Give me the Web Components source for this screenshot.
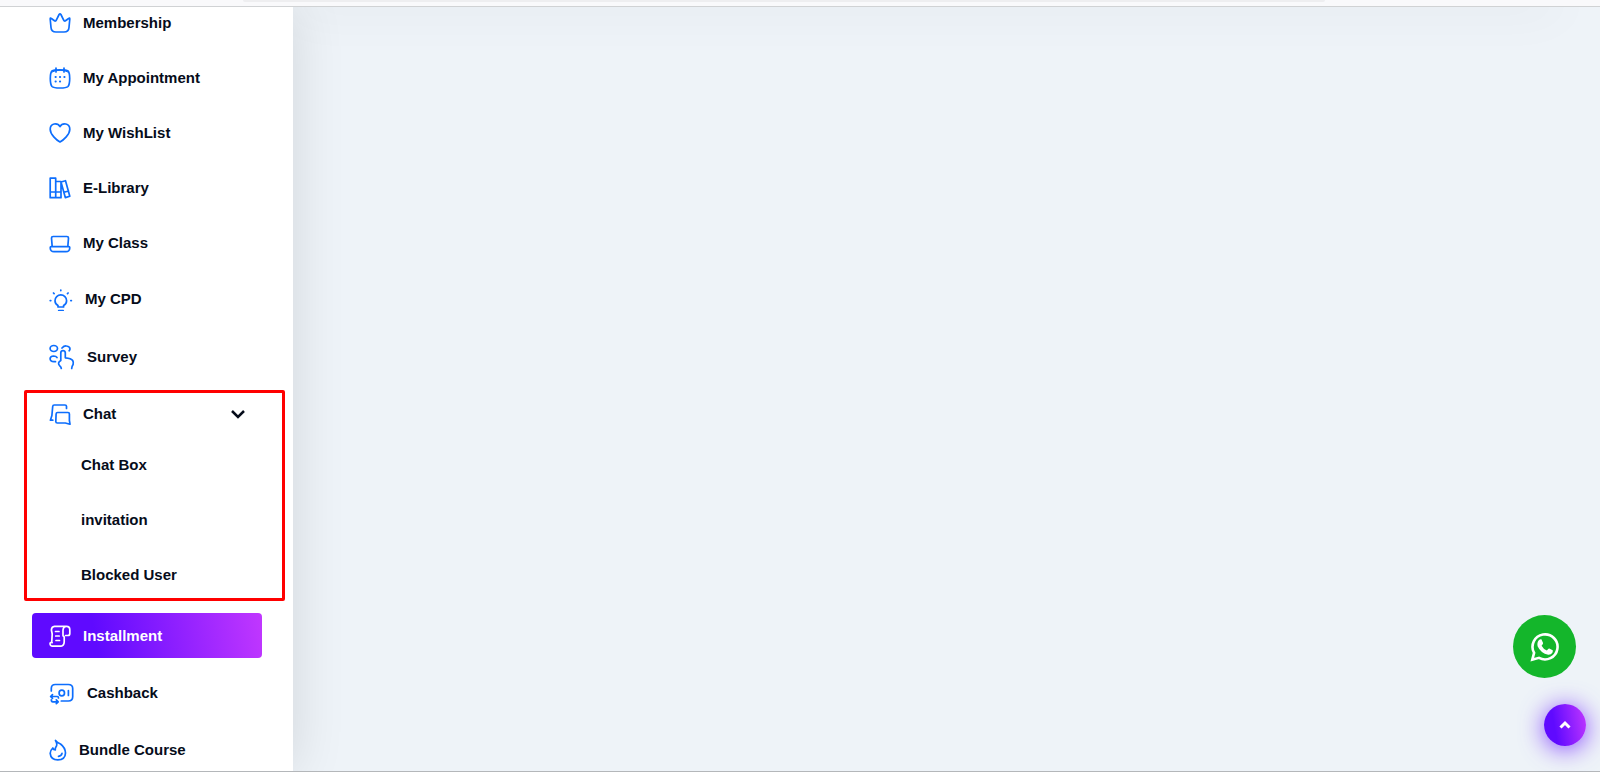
<!DOCTYPE html>
<html lang="en">
<head>
<meta charset="utf-8">
<title>Dashboard</title>
<style>
body{margin:0;height:100vh;overflow:hidden;font-family:"Liberation Sans",Arial,sans-serif;font-size:15px;line-height:20px;color:#060c1a;background:#eef3f8}
</style>
</head>
<body>
<dash-shell>
  <side-nav slot="nav">
    <nav-item icon="crown">Membership</nav-item>
    <nav-item icon="calendar">My Appointment</nav-item>
    <nav-item icon="heart">My WishList</nav-item>
    <nav-item icon="books">E-Library</nav-item>
    <nav-item icon="laptop">My Class</nav-item>
    <nav-item icon="bulb" size="medium">My CPD</nav-item>
    <nav-item icon="survey" size="large">Survey</nav-item>
    <nav-group label="Chat">
      <sub-item>Chat Box</sub-item>
      <sub-item>invitation</sub-item>
      <sub-item>Blocked User</sub-item>
    </nav-group>
    <nav-item icon="scroll" active>Installment</nav-item>
    <nav-item icon="cashback" size="large">Cashback</nav-item>
    <nav-item icon="flame" size="small">Bundle Course</nav-item>
  </side-nav>
  <float-actions slot="float"></float-actions>
</dash-shell>
<script>
const ICONS = {
  crown: '<path d="M1.200 7l.8 8.500Q2.300 20 7 20h8q4.700 0 5-4.500L20.800 7q0-1.500-1.200-.5L16.500 8.800q-1 .7-1.700-.5L11.900 2.500q-.9-1.300-1.800 0L7.200 8.300q-.7 1.200-1.700.5L2.400 6.500Q1.200 5.500 1.200 7z"/>',
  calendar: '<path d="M1.300 11.500q0-6 1.700-7.500Q4.500 2.800 11 2.800T19 4q1.700 1.500 1.700 7.500T19 19.500Q17.500 21 11 21T3 19.500Q1.300 17.500 1.300 11.500ZM7 1v4M15 1v4"/><path d="M3 5q3-1.700 8-1.700T19 5" stroke-width="1"/><path stroke-width="1.900" d="M6.500 10h.3M10.900 10h.3M15.300 10h.3M6.500 14.500h.3M10.900 14.500h.3"/>',
  heart: '<path d="M11 20C7.500 18 1.200 12.500 1.200 7.200 1.200 1.200 8.500.200 11 4.700 13.500.200 20.800 1.200 20.800 7.200 20.800 12.500 14.500 18 11 20Z"/>',
  books: '<path d="M1.200 1.200h5.500v19.500H1.200zM1.200 15h5.500M6.700 4.500h5.300v16.200H6.700M6.700 15H12M12 5l4.500-1.300 4.300 15.500-4.500 1.400L12 5M15 15.300l4.600-1.300"/>',
  laptop: '<path d="M3.200 14.700 2.500 6Q2.500 4.500 4.100 4.500h13.800Q19.500 4.500 19.500 6l-.7 8.700M2.200 14.700h17.600q1 0 1 1-.2 4-3.800 4H5q-3.600 0-3.800-4 0-1 1-1z"/>',
  bulb: '<path d="M9 20v-1.500Q6 16.800 6 13.700A5.800 5.800 0 0 1 17.600 13.700Q17.600 16.800 14.600 18.500V20zM9.700 23.700h4.500M11.800 3v.6M4.500 6l.6.600M19.100 6l-.6.600M1.200 13.600h.6M21.800 13.600h.6"/>',
  survey: '<ellipse cx="4.800" cy="4.500" rx="3.700" ry="3"/><path d="M13 4q2-2.300 4.500-2 3.500.3 3.500 3 0 1-.9 1.800M8 13.500Q7 12 4.700 12 1.200 12.300 1.100 14.700 1.200 17.500 5 17.700h1.500M12.300 24.500q-.2-1.300-1.300-2.300-3.300-3.200.8-5.700V8.600q.2-2 2.200-2t2.300 2V13.800q6 .5 7.400 2.700 1 1.700.4 4-1.400 2-1.400 4"/>',
  chat: '<path d="M17.500 5.500V3.300Q17.400 2 16 2H5.200Q3.800 2 3.700 3.500L2.900 12.500 1.400 17.200H3.800"/><path d="M20.400 17.500V11Q20.400 9.500 19 9.500H8.600Q7.200 9.500 7.100 11L6.800 18.500Q6.800 20 8.300 20h8l4.700 1.200z"/>',
  scroll: '<path d="M16.500 10.500h2.500q1.800 0 1.800-2V4.700Q20.800 1.300 17.500 1.300H5.500Q2.500 1.500 2.400 5l.8 4-.5 8.500M14 5q.3-3.300 3-3.500M14 5v5.500q.2.800 1.200 1.500V17q-.2 4.200-4 4.200H3.500Q.8 21 1.100 18q1-1 2-.3M6.500 6.500H10M6.700 11h3.500M7 15.500h3.500"/>',
  cashback: '<path d="M2.300 11V8.500Q2.300 4.500 6.300 4.500h13Q23.700 4.500 23.700 8.500v8.300q0 4.200-4.400 4.200h-7"/><ellipse cx="12.800" cy="13" rx="2.700" ry="2.900"/><path d="M19.400 10.500v5M1.800 16.500h6.400q1.300 0 1.300 1.500M3.500 14.600l-1.900 1.900 1.900 1.900M2.300 19.800q0 2 1.500 2H9M7.300 19.900l1.900 1.900-1.900 1.900"/>',
  flame: '<path d="M6.500 1.500Q9 5.500 6.800 8.300 6 9.500 6.300 11 4.500 11 3.800 9 1.200 11.500 1.200 14.300 1.800 20.700 8.800 20.900 16.300 20.700 16.500 14 16.200 8.500 11.500 5 8 3.500 6.500 1.500Z"/><path d="M9.500 17.300q3-.3 3.500-3"/>'
};
const SIZES = {small:[18,45], normal:[22,45], medium:[24,47], large:[26,49]};
function svg(name, size) {
  const w = SIZES[size][0], h = Math.max(22, w);
  return `<svg width="${w}" height="${h}" viewBox="0 0 ${w} ${h}" fill="none" stroke="currentColor" stroke-width="1.700" stroke-linecap="round" stroke-linejoin="round" aria-hidden="true">${ICONS[name]}</svg>`;
}
function define(name, render) {
  customElements.define(name, class extends HTMLElement {
    connectedCallback() {
      if (!this.shadowRoot) this.attachShadow({mode:'open'}).innerHTML = render(this);
    }
  });
}
define('dash-shell', () => `<style>
:host{display:flex;flex-direction:column;height:100vh;box-sizing:border-box;border-bottom:1px solid #b4b7ba}
.strip{flex:none;height:6px;background:#f9f9fb;border-bottom:1px solid #d0d2d4;display:flex;align-items:flex-start;position:relative;z-index:2}
.strip i{height:2px;margin-left:243px;margin-right:275px;flex:1;background:#eeeef0;border-radius:0 0 4px 4px}
.body{flex:1;min-height:0;display:flex;overflow:hidden}
main{flex:1;background:#eef3f8;overflow:hidden}
.top{height:10px;margin:-10px 40px 0 0;box-shadow:0 0 50px rgba(0,20,20,.11)}
</style><div class="strip"><i></i></div><div class="body"><slot name="nav"></slot><main><div class="top"></div></main></div><slot name="float"></slot>`);
define('side-nav', () => `<style>
:host{display:block;flex:none;width:293px;background:#fff;position:relative;z-index:1;box-shadow:0 0 50px rgba(0,20,20,.12)}
nav{display:flex;flex-direction:column;gap:10px;margin:-7px 31px 0 32px}
</style><nav aria-label="Dashboard"><slot></slot></nav>`);
define('nav-item', el => {
  const size = el.getAttribute('size') || 'normal';
  return `<style>
:host{display:block}
a{display:flex;align-items:center;gap:12px;height:${SIZES[size][1]}px;padding-left:17px;border-radius:4px;color:inherit;font-weight:700;text-decoration:none;white-space:nowrap}
svg{flex:none;color:#0d6efd}
:host([active]) a{color:#fff;background:linear-gradient(80deg,#5f0aff 28%,#c137ff)}
:host([active]) svg{color:#fff}
</style><a href="#">${svg(el.getAttribute('icon'), size)}<span><slot></slot></span></a>`;
});
define('nav-group', el => `<style>
:host{display:block;position:relative;margin-bottom:6px}
button{display:flex;align-items:center;gap:12px;width:100%;height:45px;padding:0 16px 0 17px;border:0;background:none;font:inherit;font-weight:700;color:inherit;text-align:left}
button span{flex:1}
svg{color:#0d6efd;flex:none}
.chev{color:#060c1a}
.sub{display:flex;flex-direction:column;gap:10px;margin-top:6px}
.mark{position:absolute;inset:-1px -23px -4px -8px;border:3px solid #f00;border-radius:2px;pointer-events:none}
</style><button aria-expanded="true">${svg('chat','normal')}<span>${el.getAttribute('label')}</span><svg class="chev" width="16" height="10" viewBox="0 0 16 10" fill="none" stroke="currentColor" stroke-width="2.500"><path d="M2 2l6 6 6-6"/></svg></button><div class="sub"><slot></slot></div><div class="mark"></div>`);
define('sub-item', () => `<style>
:host{display:block}
a{display:flex;align-items:center;height:45px;padding-left:49px;color:inherit;font-weight:700;text-decoration:none}
</style><a href="#"><slot></slot></a>`);
define('float-actions', () => `<style>
:host{position:fixed;right:14px;bottom:26px;z-index:3;display:flex;flex-direction:column;align-items:flex-end;gap:26px}
a,button{display:flex;align-items:center;justify-content:center;border-radius:50%;color:#fff}
a{width:63px;height:63px;margin-right:10px;background:#14b62b}
button{width:42px;height:42px;padding:0;border:0;background:linear-gradient(80deg,#5f0aff 28%,#c137ff);box-shadow:0 3px 24px rgba(95,10,255,.75)}
</style><a href="#" aria-label="WhatsApp"><svg width="30" height="30" viewBox="0 0 30 30" fill="none"><path d="M2.300 27.700 4.100 20.900A12.500 12.500 0 1 1 9 25.800Z" stroke="#fff" stroke-width="2.600" stroke-linejoin="miter"/><path fill="#fff" d="M9 8q1-1 2.400-.7l1.700 3.800q.3.700-1.500 2.600 1.800 3.500 5.300 4.800 1.600-2.400 2.400-2l3.400 1.800q.4.400-.2 2.100-1.300 2.500-4.300 2.300-7.400-1.500-10.600-8.500-.8-4 1.400-6.200Z"/></svg></a>
<button aria-label="Back to top"><svg width="12" height="10" viewBox="0 0 12 10" fill="none" stroke="currentColor" stroke-width="3"><path d="M1.500 7.500 6 3l4.500 4.500"/></svg></button>`);
</script>
</body>
</html>
